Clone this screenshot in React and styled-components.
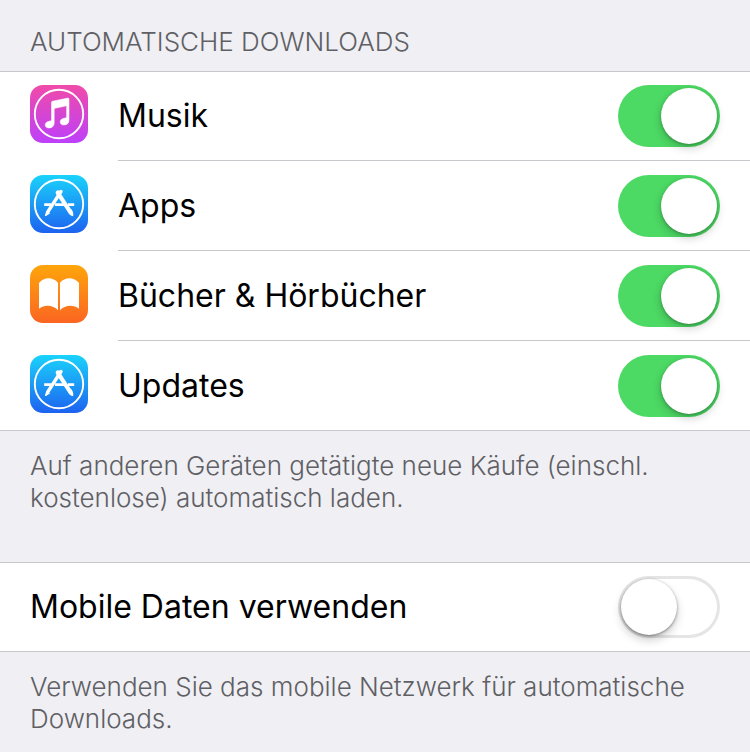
import React from 'react'
import styled, { createGlobalStyle } from "styled-components";

const downloads = [
    { id: 'musik', title: 'Musik', Icon: MusicIcon },
    { id: 'apps', title: 'Apps', Icon: StoreIcon },
    { id: 'buecher', title: 'Bücher & Hörbücher', Icon: BooksIcon },
    { id: 'updates', title: 'Updates', Icon: StoreIcon },
]

export default function App() {
    return (<>
        <GlobalStyle/>
        <Page>
            <SectionTitle>AUTOMATISCHE DOWNLOADS</SectionTitle>
            <List>
                {downloads.map(({id,title,Icon})=>(
                    <SwitchRow key={id} id={id} title={title} icon={<Icon id={id}/>} defaultOn/>
                ))}
            </List>
            <SectionNote>
                Auf anderen Geräten getätigte neue Käufe (einschl. kostenlose) automatisch laden.
            </SectionNote>
            <List $spaced>
                <SwitchRow id="mobile" title="Mobile Daten verwenden"/>
            </List>
            <SectionNote>
                Verwenden Sie das mobile Netzwerk für automatische Downloads.
            </SectionNote>
        </Page>
    </>)
}

function SwitchRow({id,title,icon,defaultOn=false}) {
    const [on, setOn] = React.useState(defaultOn);

    return (
        <Row>
            {icon}
            <RowContent>
                <RowLabel htmlFor={id}>{title}</RowLabel>
                <Switch type="checkbox" role="switch" id={id} checked={on} onChange={()=>setOn(!on)}/>
            </RowContent>
        </Row>
    )
}

function IconTile({id,from,to,children}) {
    return (
        <Tile viewBox="0 0 58 58" aria-hidden="true">
            <defs>
                <linearGradient id={`${id}-fill`} x1="0" y1="0" x2="0" y2="1">
                    <stop offset="0" stopColor={from}/>
                    <stop offset="1" stopColor={to}/>
                </linearGradient>
            </defs>
            <rect width="58" height="58" rx="13" fill={`url(#${id}-fill)`}/>
            {children}
        </Tile>
    )
}

function MusicIcon({id}) {
    return (
        <IconTile id={id} from="#f04ba8" to="#bd40fb">
            <circle cx="29" cy="29" r="24.2" fill="none" stroke="#fff" strokeWidth="1.9"/>
            <path fill="#fff" stroke="#fff" strokeWidth="0.5" d="M22.3 16.3 37.8 13.1Q39 12.9 39 14.1V35.2C39 38 37.2 39.9 34 40C31.6 40 30.2 38.7 30.2 36.9C30.2 34.7 31.8 33.7 34.2 33.2L35.5 32.9Q36.6 32.7 36.6 31.4V20.8L24.2 23.4V37.7C24.2 40.8 22.3 43 19 43C16.7 43 15.2 41.7 15.2 39.9C15.2 37.8 16.8 36.8 19 36.3L20.3 36Q21.5 35.7 21.5 34.5V17.4Q21.5 16.5 22.3 16.3Z"/>
        </IconTile>
    )
}

function StoreIcon({id}) {
    return (
        <IconTile id={id} from="#1ad3fb" to="#1d62f0">
            <circle cx="29" cy="29" r="24.2" fill="none" stroke="#fff" strokeWidth="1.9"/>
            <g fill="none" stroke="#fff">
                <path strokeWidth="2.7" d="M14.2 29.6H21M25 29.6H34.5M38 29.6H44.2"/>
                <path strokeWidth="3.4" strokeLinecap="round" d="M31 16.5 18.2 36.2"/>
                <path strokeWidth="4.2" d="M27.8 17.8 39.6 35.9"/>
            </g>
            <path fill="#fff" d="M16.3 35.8 20.2 38.2 16 41Q14.8 41.4 15 40.2ZM25.7 18.3C25.2 15.5 28.6 14.1 30 16.3L30.6 17.2 26.9 19.7ZM37.6 36.7 41.4 34.3C43.2 36.5 43.5 38.7 43.2 41.3C40.6 40.7 38.7 39 37.6 36.7Z"/>
        </IconTile>
    )
}

function BooksIcon({id}) {
    return (
        <IconTile id={id} from="#fea50b" to="#fb6522">
            <path fill="#fff" d="M28 17.8V45.3C23.5 39.8 14.3 39.2 9 43.7V18C13.7 11.7 23.3 11.7 28 17.8ZM30 17.8V45.3C34.5 39.8 43.7 39.2 49 43.7V18C44.3 11.7 34.7 11.7 30 17.8Z"/>
        </IconTile>
    )
}

const GlobalStyle = createGlobalStyle`
body{
    margin:0;
    background:#efeff4;
    font-family:Inter, "Liberation Sans", sans-serif;
}
`;
const Page = styled.main`
color:#000;
`;
const SectionTitle = styled.h1`
margin:0;
padding:26px 30px 13px;
color:#5f5f64;
font-size:26px;
font-weight:300;
line-height:32px;
`;
const SectionNote = styled.p`
margin:0;
padding:19px 30px 0;
color:#5f5f64;
font-size:26px;
font-weight:300;
line-height:32px;
`;
const List = styled.ul`
list-style:none;
margin:${props=> props.$spaced?'48px':0} 0 0;
padding:0;
background:#fff;
box-shadow:inset 0 1px 0 #c8c7cc, inset 0 -1px 0 #c8c7cc;
`;
const Row = styled.li`
display:flex;
box-sizing:border-box;
min-height:90px;
padding-left:30px;
`;
const RowContent = styled.div`
flex:1;
display:flex;
align-items:center;
justify-content:space-between;
gap:20px;
padding-right:30px;
border-bottom:1px solid #c8c7cc;
`;
const RowLabel = styled.label`
font-size:32px;
line-height:40px;
cursor:pointer;
`;
const Tile = styled.svg`
flex:none;
width:58px;
height:58px;
margin:14px 30px 0 0;
`;
const Switch = styled.input`
appearance:none;
flex:none;
box-sizing:border-box;
display:flex;
width:102px;
height:62px;
margin:0;
padding:3px;
border-radius:31px;
background:${props=> props.checked?'#4cd964':'#fff'};
box-shadow:${props=> props.checked?'none':'inset 0 0 0 3px #e5e5e5'};
cursor:pointer;

&::before{
    content:"";
    width:56px;
    height:56px;
    margin-left:${props=> props.checked?'40px':0};
    border-radius:50%;
    background:#fff;
    box-shadow:${props=> props.checked?'0 4px 10px rgba(0,0,0,0.2), 0 1px 3px rgba(0,0,0,0.25)':'0 5px 10px rgba(0,0,0,0.2), 0 1px 3px rgba(0,0,0,0.4)'};
}
`;
